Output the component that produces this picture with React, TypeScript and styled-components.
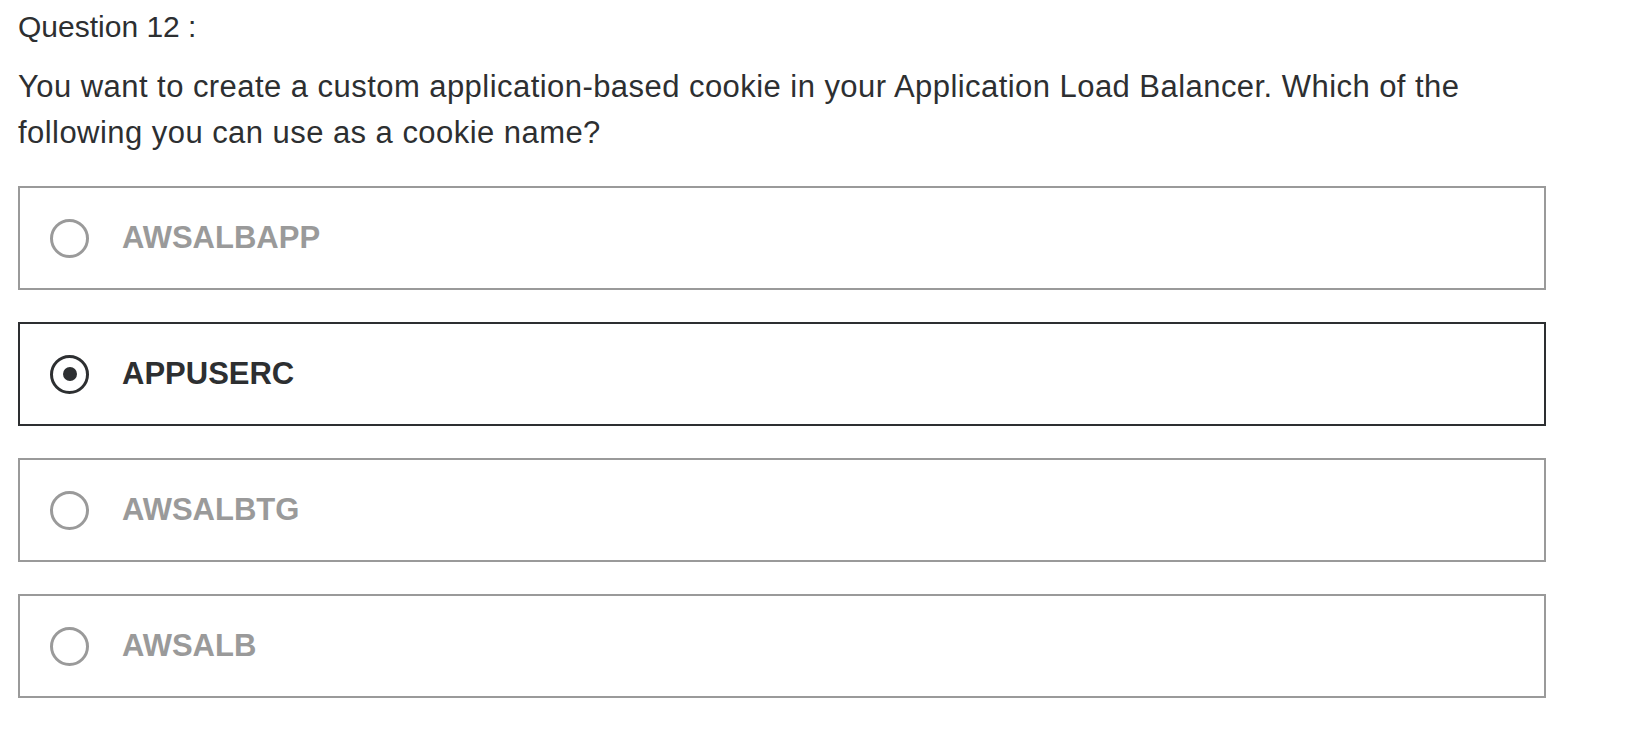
import React, { useState } from "react";
import styled, { createGlobalStyle } from "styled-components";

type OptionStyleProps = {
  $selected: boolean;
};

const options = ["AWSALBAPP", "APPUSERC", "AWSALBTG", "AWSALB"];

const GlobalStyle = createGlobalStyle`
  body {
    margin: 0;
    background: #fff;
    font-family: "Liberation Sans", Arial, sans-serif;
    color: #2d2f31;
  }
`;

const App = () => {
  const [selected, setSelected] = useState<number>(1);

  return (
    <QuizPage>
      <GlobalStyle />
      <QuestionTitle>Question 12 :</QuestionTitle>
      <QuestionText>
        You want to create a custom application-based cookie in your
        Application Load Balancer. Which of the following you can use as a
        cookie name?
      </QuestionText>
      <OptionList>
        {options.map((label, i) => (
          <OptionBox
            key={label}
            $selected={selected === i}
            onClick={() => setSelected(i)}
          >
            <Radio $selected={selected === i} />
            <OptionLabel $selected={selected === i}>{label}</OptionLabel>
          </OptionBox>
        ))}
      </OptionList>
    </QuizPage>
  );
};

export default App;

const QuizPage = styled.main`
  padding: 4px 0 0 18px;
  width: 1528px;
`;

const QuestionTitle = styled.div`
  font-size: 30px;
  line-height: 45px;
`;

const QuestionText = styled.p`
  margin: 15px 0 30px 0;
  font-size: 31px;
  letter-spacing: 0.45px;
  line-height: 46px;
  max-width: 1480px;
`;

const OptionList = styled.div`
  display: flex;
  flex-direction: column;
  gap: 32px;
`;

const OptionBox = styled.label`
  box-sizing: border-box;
  display: flex;
  align-items: center;
  height: 104px;
  padding-left: 30px;
  border: 2px solid
    ${(props: OptionStyleProps) => (props.$selected ? "#2d2f31" : "#9a9a9a")};
  cursor: pointer;
`;

const Radio = styled.span`
  box-sizing: border-box;
  position: relative;
  width: 39px;
  height: 39px;
  border-radius: 50%;
  border: 3px solid
    ${(props: OptionStyleProps) => (props.$selected ? "#2d2f31" : "#9a9a9a")};
  flex-shrink: 0;

  &::after {
    content: "";
    display: ${(props: OptionStyleProps) => (props.$selected ? "block" : "none")};
    position: absolute;
    top: 50%;
    left: 50%;
    width: 14px;
    height: 14px;
    margin: -7px 0 0 -7px;
    border-radius: 50%;
    background: #2d2f31;
  }
`;

const OptionLabel = styled.span`
  margin-left: 33px;
  margin-bottom: 2px;
  font-size: 31px;
  line-height: 1;
  font-weight: bold;
  color: ${(props: OptionStyleProps) => (props.$selected ? "#2d2f31" : "#9a9a9a")};
`;
